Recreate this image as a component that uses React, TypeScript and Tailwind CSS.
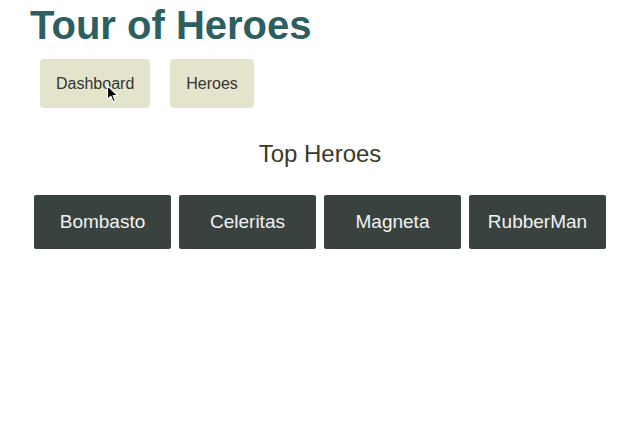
import React from "react";

function Cursor() {
  return (
    <svg
      className="absolute left-[66px] top-[25px]"
      width="14"
      height="20"
      viewBox="0 0 14 20"
    >
      <path
        d="M1.5 1.5 L1.5 15.5 L4.8 12.3 L7.2 17.8 L9.4 16.9 L7.1 11.6 L11.6 11.6 Z"
        fill="#000"
        stroke="#fff"
        strokeWidth="1.2"
        strokeLinejoin="round"
      />
    </svg>
  );
}

const heroes = ["Bombasto", "Celeritas", "Magneta", "RubberMan"];

export default function App() {
  return (
    <div className="min-h-[444px] w-[636px] bg-white font-['Liberation_Sans',Arial,sans-serif]">
      <h1 className="pt-[3px] pl-[30px] text-[40px] leading-[44px] font-bold text-[#2c5f62]">
        Tour of Heroes
      </h1>
      <nav className="mt-[12px] ml-[40px] flex gap-[20px]">
        <a className="relative rounded-[4px] bg-[#e4e4cc] px-[16px] py-[15px] text-[16px] leading-[19px] text-[#333]">
          Dashboard
          <Cursor />
        </a>
        <a className="rounded-[4px] bg-[#e4e4cc] px-[16px] py-[15px] text-[16px] leading-[19px] text-[#333]">
          Heroes
        </a>
      </nav>
      <h3 className="mt-[32px] w-[640px] text-center text-[24px] leading-[27px] text-[#3a3a28]">
        Top Heroes
      </h3>
      <div className="mt-[28px] ml-[34px] grid w-[572px] grid-cols-4 gap-[8px]">
        {heroes.map((h) => (
          <div
            key={h}
            className="flex h-[54px] items-center justify-center rounded-[2px] bg-[#3a4240] text-[19px] leading-[22px] text-[#f2f2f2]"
          >
            {h}
          </div>
        ))}
      </div>
    </div>
  );
}
